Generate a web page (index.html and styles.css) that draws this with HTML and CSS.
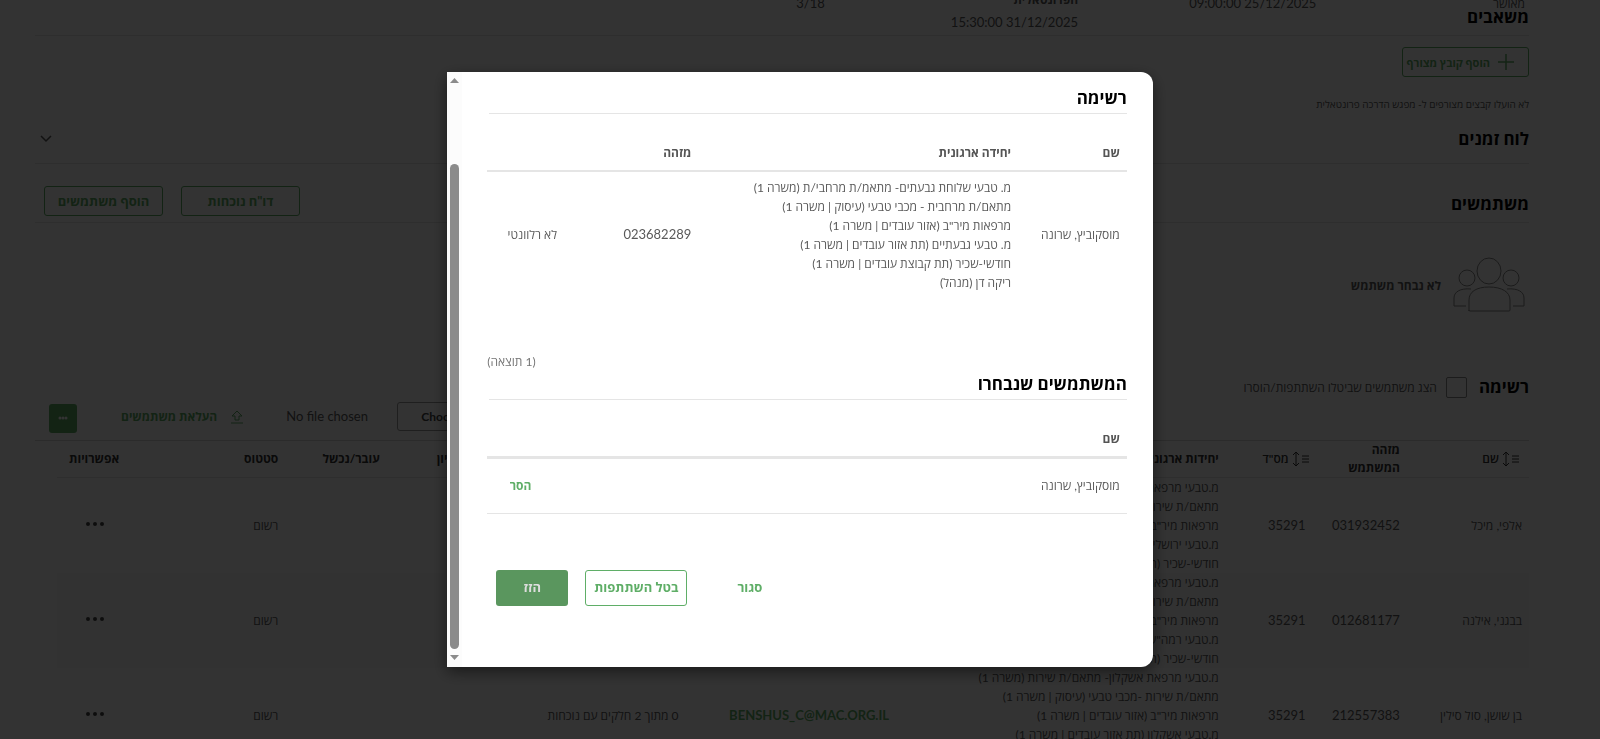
FILE: index.html
```html
<!DOCTYPE html>
<html lang="he" dir="rtl">
<head>
  <meta charset="UTF-8">
  <title>מפגש הדרכה פרונטאלית</title>
  <link rel="stylesheet" href="styles.css">
</head>
<body>
  <main class="page">
    <div class="details">
      <div>מאושר</div>
      <div class="num">25/12/2025 09:00:00</div>
      <div class="num"><b>הפרונטאלית</b>31/12/2025 15:30:00</div>
      <div class="num">3/18</div>
    </div>

    <section class="resources">
      <h2>משאבים</h2>
      <button class="btn attach-btn">
        <svg width="16" height="16" viewBox="0 0 16 16"><path d="M8 0v16M0 8h16"/></svg>
        הוסף קובץ מצורף
      </button>
      <p class="note">לא הועלו קבצים מצורפים ל- מפגש הדרכה פרונטאלית</p>
    </section>

    <section class="bar schedule">
      <h2>לוח זמנים</h2>
      <svg class="chevron" width="12" height="8" viewBox="0 0 12 8"><path d="M1 1l5 5 5-5"/></svg>
    </section>

    <section class="bar users">
      <h2>משתמשים</h2>
      <div class="users-actions">
        <button class="btn wide-btn">דו"ח נוכחות</button>
        <button class="btn wide-btn">הוסף משתמשים</button>
      </div>
    </section>

    <div class="empty">
      <svg width="72" height="56" viewBox="0 0 72 56">
        <ellipse cx="36" cy="14" rx="12" ry="13"/>
        <circle cx="14" cy="21" r="8"/>
        <circle cx="58" cy="21" r="8"/>
        <path d="M16 54V43c0-8 7-13 20-13s21 5 21 13v10q0 1-1 1H17q-1 0-1-1z"/>
        <path d="M18 32c-11-1-17 3-17 9v8h12M54 32c11-1 17 3 17 9v8H60"/>
      </svg>
      <b>לא נבחר משתמש</b>
    </div>

    <div class="list-title">
      <h2>רשימה</h2>
      <input type="checkbox" id="showRemoved">
      <label for="showRemoved">הצג משתמשים שביטלו השתתפות/הוסרו</label>
    </div>

    <div class="toolbar">
      <button class="btn file-btn" dir="ltr">Choose File</button>
      <span class="file-name">No file chosen</span>
      <button class="link upload-btn">
        <svg width="12" height="14" viewBox="0 0 12 14"><path d="M6 1L1 6h3v4h4V6h3zM0 13h12"/></svg>
        העלאת משתמשים
      </button>
      <button class="more-btn" aria-label="עוד">
        <svg width="10" height="4" viewBox="0 0 10 4"><circle cx="2" cy="2" r="1.5"/><circle cx="5" cy="2" r="1.5"/><circle cx="8" cy="2" r="1.5"/></svg>
      </button>
    </div>

    <table class="users-table">
      <colgroup>
        <col class="c-name"><col class="c-id"><col class="c-num"><col class="c-unit"><col class="c-mail">
        <col class="c-att"><col class="c-grade"><col class="c-pass"><col class="c-status"><col class="c-opt">
      </colgroup>
      <thead>
        <tr>
          <th><span class="sort"><svg width="16" height="16" viewBox="0 0 16 16"><path d="M3 1v14M0 4l3-3 3 3M0 12l3 3 3-3M9 5h7M9 8h7M9 11h7"/></svg>שם</span></th>
          <th>מזהה המשתמש</th>
          <th class="num-head"><span class="sort"><svg width="16" height="16" viewBox="0 0 16 16"><path d="M3 1v14M0 4l3-3 3 3M0 12l3 3 3-3M9 5h7M9 8h7M9 11h7"/></svg>מס"ד</span></th>
          <th>יחידות ארגוניות</th>
          <th></th>
          <th></th>
          <th>ציון</th>
          <th>עובר/נכשל</th>
          <th>סטטוס</th>
          <th>אפשרויות</th>
        </tr>
      </thead>
      <tbody>
        <tr>
          <td>אלפי, מיכל</td>
          <td class="num">031932452</td>
          <td class="num">35291</td>
          <td>מ.טבעי מרפאת ירושלים<br>מתאם/ת שירות (עיסוק | משרה 1)<br>מרפאות מיר"ב (אזור עובדים)<br>מ.טבעי ירושלים<br>חודשי-שכיר (תת קבוצת עובדים)</td>
          <td></td>
          <td></td>
          <td></td>
          <td></td>
          <td>רשום</td>
          <td><button class="dots" aria-label="אפשרויות"><svg width="20" height="4" viewBox="0 0 20 4"><circle cx="3" cy="2" r="2"/><circle cx="10" cy="2" r="2"/><circle cx="17" cy="2" r="2"/></svg></button></td>
        </tr>
        <tr>
          <td>בבגני, אילנה</td>
          <td class="num">012681177</td>
          <td class="num">35291</td>
          <td>מ.טבעי מרפאת רמה"ש<br>מתאם/ת שירות (עיסוק | משרה 1)<br>מרפאות מיר"ב (אזור עובדים)<br>מ.טבעי רמה"ש<br>חודשי-שכיר (תת קבוצת עובדים)</td>
          <td></td>
          <td></td>
          <td></td>
          <td></td>
          <td>רשום</td>
          <td><button class="dots" aria-label="אפשרויות"><svg width="20" height="4" viewBox="0 0 20 4"><circle cx="3" cy="2" r="2"/><circle cx="10" cy="2" r="2"/><circle cx="17" cy="2" r="2"/></svg></button></td>
        </tr>
        <tr>
          <td>בן שושן, סול סילין</td>
          <td class="num">212557383</td>
          <td class="num">35291</td>
          <td>מ.טבעי מרפאת אשקלון- מתאם/ת שירות (משרה 1)<br>מתאם/ת שירות -מכבי טבעי (עיסוק | משרה 1)<br>מרפאות מיר"ב (אזור עובדים | משרה 1)<br>מ.טבעי אשקלון (תת אזור עובדים | משרה 1)<br>חודשי-שכיר (תת קבוצת עובדים | משרה 1)</td>
          <td class="num"><a class="mail" href="mailto:BENSHUS_C@MAC.ORG.IL">BENSHUS_C@MAC.ORG.IL</a></td>
          <td>0 מתוך 2 חלקים עם נוכחות</td>
          <td></td>
          <td></td>
          <td>רשום</td>
          <td><button class="dots" aria-label="אפשרויות"><svg width="20" height="4" viewBox="0 0 20 4"><circle cx="3" cy="2" r="2"/><circle cx="10" cy="2" r="2"/><circle cx="17" cy="2" r="2"/></svg></button></td>
        </tr>
      </tbody>
    </table>
  </main>

  <div class="overlay">
    <div class="modal" role="dialog" aria-label="רשימה">
      <div class="modal-body">
        <h2>רשימה</h2>
        <table class="modal-table">
          <colgroup><col class="m-name"><col class="m-unit"><col class="m-id"><col></colgroup>
          <thead>
            <tr><th>שם</th><th>יחידה ארגונית</th><th>מזהה</th><th></th></tr>
          </thead>
          <tbody>
            <tr>
              <td>מוסקוביץ, שרונה</td>
              <td>מ. טבעי שלוחת גבעתים- מתאמ/ת מרחבי/ת (משרה 1)<br>מתאם/ת מרחבית - מכבי טבעי (עיסוק | משרה 1)<br>מרפאות מיר"ב (אזור עובדים | משרה 1)<br>מ. טבעי גבעתיים (תת אזור עובדים | משרה 1)<br>חודשי-שכיר (תת קבוצת עובדים | משרה 1)<br>ריקה דן (מנהל)</td>
              <td class="num">023682289</td>
              <td>לא רלוונטי</td>
            </tr>
          </tbody>
        </table>
        <p class="count">(1 תוצאה)</p>

        <h2>המשתמשים שנבחרו</h2>
        <table class="modal-table picked">
          <colgroup><col><col class="m-remove"></colgroup>
          <thead>
            <tr><th>שם</th><th></th></tr>
          </thead>
          <tbody>
            <tr>
              <td>מוסקוביץ, שרונה</td>
              <td><button class="link">הסר</button></td>
            </tr>
          </tbody>
        </table>

        <div class="modal-actions">
          <button class="link">סגור</button>
          <button class="btn cancel-btn">בטל השתתפות</button>
          <button class="move-btn">הזז</button>
        </div>
      </div>
      <div class="scrollbar">
        <svg width="9" height="5" viewBox="0 0 9 5"><path d="M0 5L4.5 0 9 5z"/></svg>
        <div class="thumb"></div>
        <svg width="9" height="5" viewBox="0 0 9 5"><path d="M0 0l4.5 5L9 0z"/></svg>
      </div>
    </div>
  </div>
</body>
</html>
```
FILE: styles.css
```css
* {
  box-sizing: border-box;
}
body {
  margin: 0;
  height: 100vh;
  overflow: hidden;
  background: #fff;
  color: #595959;
  font-family: Lato, "Open Sans", "Noto Sans", sans-serif;
  font-size: 12px;
  line-height: 19px;
}
h2 {
  margin: 0;
  color: #000;
  font-size: 17px;
  line-height: 24px;
  font-weight: bold;
}
p {
  margin: 0;
}
button {
  font: inherit;
  font-weight: bold;
  cursor: pointer;
}
svg {
  fill: none;
  stroke: currentColor;
  flex: none;
}
.page {
  padding: 0 71px 0 35px;
}
.btn {
  background: #fff;
  border: 1px solid #5fae67;
  border-radius: 3px;
  color: #5fae67;
}
.link {
  background: none;
  border: 0;
  padding: 0;
  color: #5fae67;
}

/* Meeting details, scrolled half out of view */
.details {
  display: grid;
  grid-template-columns: 14% 16% 17% 1fr;
  height: 24px;
  margin-top: -19px;
  padding-right: 4px;
}
.details div {
  margin-top: 13px;
}
.details b {
  display: block;
  margin: -4px 0 4px;
  font-size: 12px;
}

.resources h2 {
  height: 31px;
  border-bottom: 1px solid #e5e5e5;
}
.attach-btn {
  display: flex;
  align-items: center;
  gap: 8px;
  height: 30px;
  margin-top: 11px;
  padding: 0 14px 0 4px;
  font-size: 11px;
}
.attach-btn svg {
  stroke-width: 1.5;
}
.note {
  margin-top: 18px;
  font-size: 10px;
}
.bar {
  display: flex;
  justify-content: space-between;
  border-bottom: 1px solid #e5e5e5;
}
.schedule {
  align-items: center;
  height: 38px;
  margin-top: 12px;
  padding: 0 0 12px 5px;
}
.chevron {
  stroke-width: 1.5;
}
.users {
  align-items: flex-end;
  height: 59px;
  padding: 0 0 6px 9px;
}
.users-actions {
  display: flex;
  gap: 18px;
}
.wide-btn {
  width: 119px;
  height: 30px;
}
.wide-btn,
.cancel-btn,
.move-btn,
.modal-actions .link {
  font-size: 13px;
}
.empty {
  display: flex;
  align-items: center;
  gap: 12px;
  margin: 34px 4px 0 0;
}
.empty svg {
  color: #888;
}
.list-title {
  display: flex;
  align-items: center;
  margin-top: 62px;
}
.list-title input {
  appearance: none;
  width: 21px;
  height: 21px;
  margin: 0 12px 0 9px;
  border: 1px solid #8a8a8a;
  border-radius: 2px;
}
.toolbar {
  display: flex;
  align-items: center;
  justify-content: flex-end;
  height: 42px;
  padding: 0 0 6px 14px;
  border-bottom: 1px solid #d5d5d5;
}
.file-btn {
  width: 111px;
  height: 29px;
  border-color: #999;
  color: #404040;
}
.file-name {
  margin: 0 29px 0 43px;
  font-size: 13px;
}
.upload-btn {
  display: flex;
  align-items: center;
  gap: 14px;
  margin-left: 44px;
}
.more-btn {
  width: 28px;
  height: 29px;
  margin-top: 4px;
  padding: 0 0 6px;
  border: 0;
  border-radius: 3px;
  background: #5fae67;
  line-height: 8px;
  color: #fff;
}
.more-btn svg,
.dots svg {
  fill: currentColor;
  stroke: none;
}

table {
  border-collapse: collapse;
  table-layout: fixed;
}
th,
td {
  padding: 0 7px;
  text-align: right;
  white-space: nowrap;
}
.num {
  font-size: 13px;
}
.users-table {
  width: calc(100% - 22px);
}
.users-table th {
  height: 36px;
  border-bottom: 1px solid #e5e5e5;
  color: #333;
  line-height: 18px;
  white-space: normal;
}
.users-table tr:nth-child(even) td {
  background: #fafafa;
}
.sort {
  display: flex;
  align-items: center;
  gap: 4px;
  padding-right: 3px;
  font-weight: 600;
}
.users-table .num-head {
  padding-right: 1px;
}
.mail {
  color: #5fae67;
  font-weight: bold;
  text-decoration: none;
}
.dots {
  display: block;
  padding: 0 14px 6px;
  border: 0;
  background: none;
  line-height: 4px;
  color: #444;
}
.c-name { width: 8.3%; }
.c-id { width: 6.4%; }
.c-num { width: 5.9%; }
.c-unit { width: 22.4%; }
.c-mail { width: 14.3%; }
.c-att { width: 15.2%; }
.c-grade { width: 5.1%; }
.c-pass { width: 6.9%; }
.c-status { width: 10.8%; }

/* Dialog */
.overlay {
  position: fixed;
  inset: 0;
  display: flex;
  align-items: center;
  justify-content: center;
  background: rgba(0, 0, 0, 0.8);
}
.modal {
  display: flex;
  width: 44.1%;
  border-radius: 0 12px 12px 0;
  background: #fff;
  box-shadow: 0 5px 15px rgba(0, 0, 0, 0.5);
  overflow: hidden;
}
.modal-body {
  flex: 1;
  padding: 14px 26px 61px 25px;
}
.modal-body h2 {
  height: 28px;
  margin-left: 2px;
  border-bottom: 1px solid #e5e5e5;
}
.modal-table {
  width: 100%;
}
.modal-table th {
  height: 57px;
  padding-top: 20px;
  border-bottom: 2px solid #e5e5e5;
  color: #555;
}
.modal-table td {
  height: 126px;
}
.m-name { width: 17%; }
.m-unit { width: 50%; }
.m-id { width: 21%; }
.m-remove { width: 8%; }
.count {
  margin: 55px 0 1px;
  text-align: left;
  color: #757575;
}
.picked th {
  border-bottom-width: 3px;
}
.picked td {
  height: 56px;
  border-bottom: 1px solid #e5e5e5;
}
.modal-actions {
  display: flex;
  align-items: center;
  justify-content: flex-end;
  margin: 56px 0 0 9px;
}
.cancel-btn {
  height: 36px;
  margin: 0 50px 0 17px;
  padding: 0 8px;
}
.move-btn {
  width: 72px;
  height: 36px;
  border: 0;
  border-radius: 3px;
  background: #5a965e;
  color: #ddd;
}
.scrollbar {
  display: flex;
  flex-direction: column;
  align-items: center;
  width: 15px;
  padding: 6px 0 7px;
  background: #fcfcfc;
}
.scrollbar svg {
  fill: #8b8b8b;
  stroke: none;
}
.thumb {
  flex: 1;
  width: 9px;
  margin: 81px 0 6px;
  border-radius: 5px;
  background: #8b8b8b;
}
```
